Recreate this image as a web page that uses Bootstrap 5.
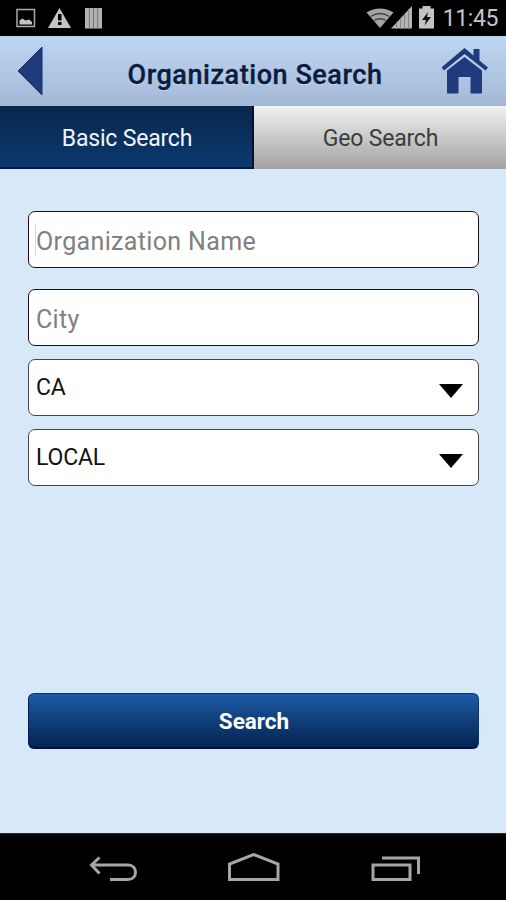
<!DOCTYPE html>
<html lang="en">
<head>
<meta charset="utf-8">
<meta name="viewport" content="width=device-width, initial-scale=1">
<title>Organization Search</title>
<link href="https://cdn.jsdelivr.net/npm/bootstrap@5.3.0/dist/css/bootstrap.min.css" rel="stylesheet">
<style>
  body { font-family: Roboto, "Liberation Sans", sans-serif; height: 900px; background: #d7e8f8; overflow: hidden; }
  svg { display: block; flex: none; }
  .status-bar { height: 36px; background: #000; color: #c4c4c4; }
  .clock { font-size: 23px; line-height: 38px; letter-spacing: -.4px; }
  .title-bar { height: 70px; background: linear-gradient(#bfd6f2, #a3b9d7); border-top: 1px solid #b9d3ee; }
  .title-bar h1 { font-size: 27px; font-weight: 500; letter-spacing: .55px; color: #0a1d40; -webkit-text-stroke: .4px #0a1d40; text-shadow: 0 1px 1px #dbe7f6; }
  .tab-item { height: 63px; font-size: 23px; letter-spacing: -.2px; border: 0; border-radius: 0; padding: 3px 0 0; }
  .tab-on { width: 254px; padding: 5px 0 0 2px; background: linear-gradient(#08264c, #0b3a70); color: #f2f5fb; border-right: 2px solid #03103c; border-bottom: 2px solid #031650; }
  .tab-off { padding: 4px 0 0 1px; background: linear-gradient(#f1f1f1, #a2a2a2); color: #3c3c3c; }
  .search-form { padding: 42px 27px 0 28px; }
  .field { height: 57px; padding: 2px 7px 0; border: 1.5px solid #1c1018; border-radius: 7px; background: #fff; color: #111; }
  .field:focus { box-shadow: none; border-color: #1c1018; }
  input.field { padding-top: 3px; font-size: 25px; letter-spacing: .35px; }
  input.field::placeholder { color: #808080; opacity: 1; }
  .name-field { background: linear-gradient(#dcdcdc, #dcdcdc) 6px 12px / 1px 33px no-repeat #fff; }
  .picker { font-size: 23px; letter-spacing: -.15px; border-color: #45454c; }
  .gap-first { margin-bottom: 21px; }
  .gap-next { margin-bottom: 13px; }
  .go { height: 56px; margin-top: 207px; padding: 3px 0 0 1px; border: 1px solid #0b3770; border-left-color: #041a58; border-bottom: 2px solid #03104a; border-radius: 6px; background: linear-gradient(#1e5ba6, #032450); color: #fff; font-size: 22.5px; font-weight: 700; }
  .go:hover { color: #fff; }
  .system-bar { height: 67px; background: #000; border-top: 1px solid #25292e; }
</style>
</head>
<body class="d-flex flex-column">
  <header>
    <div class="status-bar d-flex justify-content-between">
      <svg width="120" height="36" fill="#c4c4c4">
        <path d="M17 9.500h17.500v17h-17.500z" fill="none" stroke="#aaa" stroke-width="1.500"/>
        <path d="M19.500 24.500v-4l3-2 3 2 3.500-1 3 2.500v2.500z"/>
        <path fill-rule="evenodd" d="M59.500 8l11.500 20h-23zM58 14v6.500h3.500v-6.500zM58 22v3h3.500v-3z"/>
        <path d="M85 8h17v20.500h-17z" fill="#b2b2b2"/>
        <path d="M89.300 8v20.500M93.500 8v20.500M97.700 8v20.500" stroke="#747474" stroke-width="1"/>
      </svg>
      <div class="d-flex">
        <svg width="77" height="36" viewBox="366 0 77 36" fill="#c4c4c4">
          <path d="M380 28L366.500 12.500Q380 4.500 393.500 12.500z" fill="#a5a5a5"/>
          <path d="M370.500 16.500Q380 10.500 389.500 16.500M374 20.500Q380 17 386 20.500" fill="none" stroke="#444" stroke-width="1.300"/>
          <path d="M412 6v22.500h-21z" fill="#b5b5b5"/>
          <path d="M396.500 22v7M400.500 18v11M404.500 14v15M408.500 9v20" stroke="#858585" stroke-width="1"/>
          <path d="M419 8.500h3.500v-2.500h8v2.500h3.500v20h-15z"/>
          <path d="M428 12l-6 8h4l-1.500 5.500 6.500-8.500h-4z" fill="#111"/>
        </svg>
        <div class="clock pe-2">11:45</div>
      </div>
    </div>
    <div class="title-bar d-flex align-items-center justify-content-between">
      <svg width="64" height="69" viewBox="0 37 64 69" role="img" aria-label="Back"><path d="M42 47v48L18 71z" fill="#203b7c" stroke="#172d6a"/></svg>
      <h1 class="m-0 pt-2 ps-1 text-nowrap">Organization Search</h1>
      <svg width="64" height="69" viewBox="442 37 64 69" fill="#203b7c" role="img" aria-label="Home">
        <path d="M464.500 48l9 7.500v-6.500h6v11.500l8.500 7-2.500 3-21-16.500-20.500 16.500-2.500-3z"/>
        <path d="M464.500 57l17.500 13.500v23h-11.500v-16.500h-12v16.500h-11.500v-23z"/>
      </svg>
    </div>
    <nav class="d-flex">
      <button class="tab-item tab-on" type="button">Basic Search</button>
      <button class="tab-item tab-off flex-fill" type="button">Geo Search</button>
    </nav>
  </header>
  <main class="flex-grow-1">
    <form class="search-form d-flex flex-column">
      <input class="field name-field form-control gap-first" type="text" placeholder="Organization Name" aria-label="Organization Name">
      <input class="field form-control gap-next" type="text" placeholder="City" aria-label="City">
      <div class="field picker gap-next d-flex align-items-center justify-content-between" role="button">
        <span>CA</span>
        <svg class="mt-1" width="33" height="14"><path d="M1 0h24l-12 14z"/></svg>
      </div>
      <div class="field picker d-flex align-items-center justify-content-between" role="button">
        <span>LOCAL</span>
        <svg class="mt-1" width="33" height="14"><path d="M1 0h24l-12 14z"/></svg>
      </div>
      <button class="go btn w-100" type="button">Search</button>
    </form>
  </main>
  <footer class="system-bar">
    <svg width="506" height="66" viewBox="0 834 506 66" fill="none" stroke="#a6a6a6" stroke-width="3">
      <path d="M99.500 857.500l-8 7.500 8 8.500M92 865h36c10 0 10 14.500 0 14.500h-18"/>
      <path d="M229.500 879.500v-15.500l24-9.500 24.500 9.500v15.500z"/>
      <path d="M373 865h37v14.500h-37zM382 858h36.500v16"/>
    </svg>
  </footer>
<script src="https://cdn.jsdelivr.net/npm/bootstrap@5.3.0/dist/js/bootstrap.bundle.min.js"></script>
</body>
</html>
